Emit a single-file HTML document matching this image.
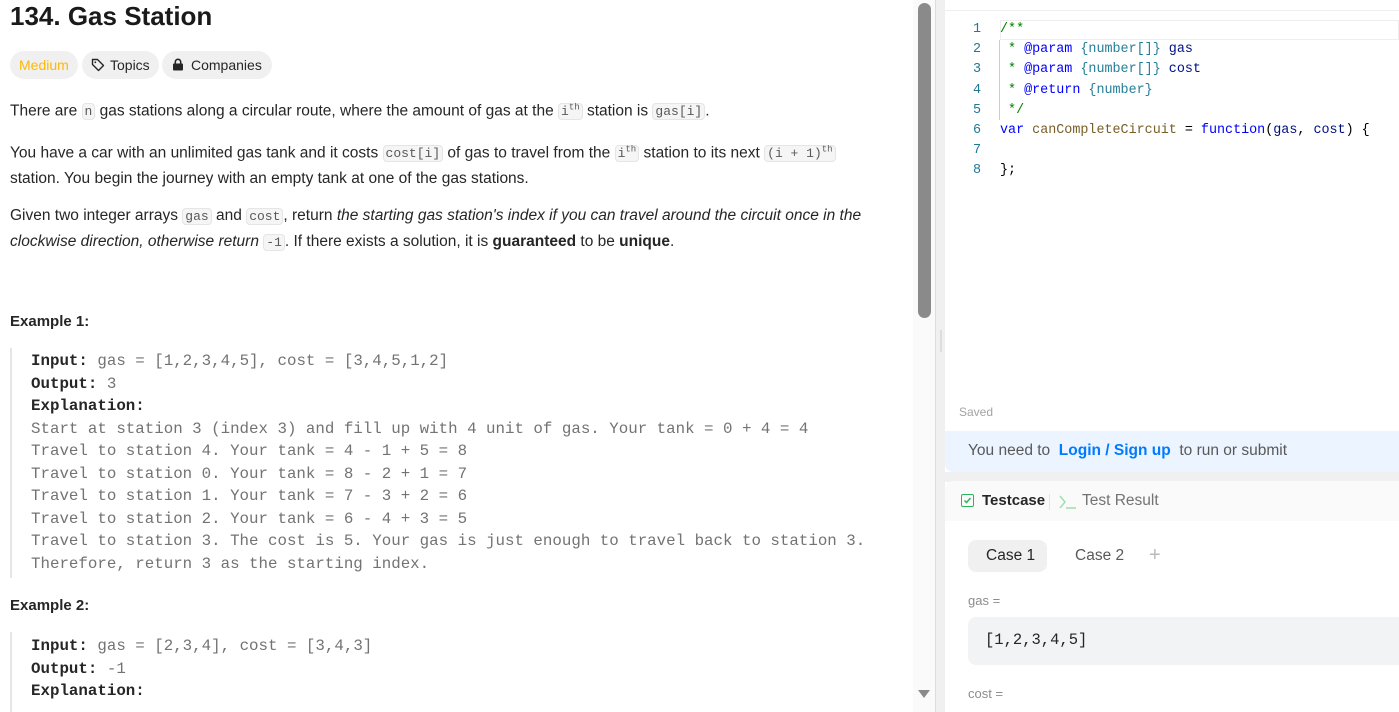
<!DOCTYPE html>
<html><head><meta charset="utf-8"><style>
*{box-sizing:border-box;margin:0;padding:0}
body{width:1399px;height:712px;overflow:hidden;background:#fff;font-family:"Liberation Sans",sans-serif;color:#262626;position:relative}
.abs{position:absolute}
.p{font-size:15.5px;color:#262626;line-height:25px}
code{font-family:"Liberation Mono",monospace;font-size:13px;background:#f5f5f5;border:1px solid #e5e5e5;border-radius:4px;padding:0 2px;color:#595959}
.pre{font-family:"Liberation Mono",monospace;font-size:15.8px;line-height:22.5px;color:#737373;white-space:pre}
.pre b{color:#262626}
.tag{position:absolute;top:51px;height:28px;border-radius:14px;background:#f0f0f0;font-size:14px;line-height:29px;padding:0 9px}
.code{font-family:"Liberation Mono",monospace;font-size:13.4px;line-height:20.2px;white-space:pre}
.ln{color:#237893;text-align:right;width:20px}
</style></head><body>
<div class="abs" style="left:10px;top:1px;font-size:26px;font-weight:bold;color:#1a1a1a">134. Gas Station</div>
<div class="tag" style="left:10px;color:#ffb800">Medium</div>
<div class="tag" style="left:82px"><svg width="14" height="14" viewBox="0 0 14 14" style="vertical-align:-2px;margin-right:5px"><path d="M1.5 1.5h5l6 6-5 5-6-6z" fill="none" stroke="#262626" stroke-width="1.4" stroke-linejoin="round"/><circle cx="4.3" cy="4.3" r="0.9" fill="#262626"/></svg>Topics</div>
<div class="tag" style="left:162px;padding:0 10px"><svg width="12" height="13" viewBox="0 0 12 13" style="vertical-align:-1px;margin-right:7px"><rect x="1" y="5.5" width="10" height="7" rx="1" fill="#262626"/><path d="M3.3 5.5V4a2.7 2.7 0 0 1 5.4 0v1.5" fill="none" stroke="#262626" stroke-width="1.6"/></svg>Companies</div>
<div class="abs p" style="left:10px;top:96px">There are <code>n</code> gas stations along a circular route, where the amount of gas at the <code>i<sup style="font-size:9px">th</sup></code> station is <code>gas[i]</code>.</div>
<div class="abs p" style="left:10px;top:138px;width:890px">You have a car with an unlimited gas tank and it costs <code>cost[i]</code> of gas to travel from the <code>i<sup style="font-size:9px">th</sup></code> station to its next <code>(i + 1)<sup style="font-size:9px">th</sup></code><br>station. You begin the journey with an empty tank at one of the gas stations.</div>
<div class="abs p" style="left:10px;top:203px;width:890px">Given two integer arrays <code>gas</code> and <code>cost</code>, return <i>the starting gas station's index if you can travel around the circuit once in the clockwise direction, otherwise return</i> <code>-1</code>. If there exists a solution, it is <b>guaranteed</b> to be <b>unique</b>.</div>
<div class="abs" style="left:10px;top:313px;font-size:15px;font-weight:bold">Example 1:</div>
<div class="abs" style="left:10px;top:348px;width:2px;height:230px;background:#e5e5e5"></div>
<div class="abs pre" style="left:31px;top:350px"><b>Input:</b> gas = [1,2,3,4,5], cost = [3,4,5,1,2]
<b>Output:</b> 3
<b>Explanation:</b>
Start at station 3 (index 3) and fill up with 4 unit of gas. Your tank = 0 + 4 = 4
Travel to station 4. Your tank = 4 - 1 + 5 = 8
Travel to station 0. Your tank = 8 - 2 + 1 = 7
Travel to station 1. Your tank = 7 - 3 + 2 = 6
Travel to station 2. Your tank = 6 - 4 + 3 = 5
Travel to station 3. The cost is 5. Your gas is just enough to travel back to station 3.
Therefore, return 3 as the starting index.</div>
<div class="abs" style="left:10px;top:597px;font-size:15px;font-weight:bold">Example 2:</div>
<div class="abs" style="left:10px;top:632px;width:2px;height:80px;background:#e5e5e5"></div>
<div class="abs pre" style="left:31px;top:635px"><b>Input:</b> gas = [2,3,4], cost = [3,4,3]
<b>Output:</b> -1
<b>Explanation:</b></div>
<div class="abs" style="left:913px;top:0;width:22px;height:712px;background:#fafafa"></div>
<div class="abs" style="left:918px;top:3px;width:13px;height:315px;background:#8a8a8a;border-radius:7px"></div>
<div class="abs" style="left:918px;top:690px;width:0;height:0;border-left:6px solid transparent;border-right:6px solid transparent;border-top:8px solid #8a8a8a"></div>
<div class="abs" style="left:935px;top:0;width:10px;height:712px;background:#f0f0f0;border-left:1px solid #ddd"></div>
<div class="abs" style="left:940px;top:330px;width:2px;height:22px;background:#ddd"></div>
<div class="abs" style="left:945px;top:10px;width:454px;height:1px;background:#eee"></div>
<div class="abs" style="left:1000px;top:20px;width:399px;height:20px;border:1px solid #eee"></div>
<div class="abs" style="left:999px;top:40px;width:1px;height:80px;background:#ccc"></div>
<div class="abs code ln" style="left:961px;top:20px">1
2
3
4
5
6
7
8</div>
<div class="abs code" style="left:1000px;top:20px;color:#000"><span style="color:#008000">/**</span>
<span style="color:#008000"> * </span><span style="color:#0000ff">@param</span> <span style="color:#267f99">{number[]}</span> <span style="color:#001080">gas</span>
<span style="color:#008000"> * </span><span style="color:#0000ff">@param</span> <span style="color:#267f99">{number[]}</span> <span style="color:#001080">cost</span>
<span style="color:#008000"> * </span><span style="color:#0000ff">@return</span> <span style="color:#267f99">{number}</span>
<span style="color:#008000"> */</span>
<span style="color:#0000ff">var</span> <span style="color:#795e26">canCompleteCircuit</span> = <span style="color:#0000ff">function</span>(<span style="color:#001080">gas</span>, <span style="color:#001080">cost</span>) {

};</div>
<div class="abs" style="left:959px;top:405px;font-size:12px;color:#a3a3a3">Saved</div>
<div class="abs" style="left:945px;top:431px;width:454px;height:41px;background:#ebf4ff;border-radius:0 0 0 8px"></div>
<div class="abs" style="left:968px;top:442px;font-size:15.5px;color:#595959">You need to &nbsp;<span style="color:#007aff;font-weight:bold">Login / Sign up</span>&nbsp; to run or submit</div>
<div class="abs" style="left:945px;top:472px;width:454px;height:10px;background:#f0f0f0"></div>
<div class="abs" style="left:945px;top:481px;width:454px;height:40px;background:#fafafa;border-radius:8px 0 0 0"></div>
<div class="abs" style="left:961px;top:494px;width:13px;height:13px;border:1.5px solid #2db55d;border-radius:2px"></div>
<svg class="abs" style="left:961px;top:494px" width="13" height="13"><path d="M3.5 6.5l2 2 4-4.5" fill="none" stroke="#2db55d" stroke-width="1.5"/></svg>
<div class="abs" style="left:982px;top:492px;font-size:15px;font-weight:bold;color:#262626">Testcase</div>
<div class="abs" style="left:1049px;top:494px;width:1px;height:16px;background:#e5e5e5"></div>
<svg class="abs" style="left:1058px;top:494px" width="20" height="16"><path d="M2 2l5 6-5 6M8 14h10" fill="none" stroke="#9ee0b0" stroke-width="1.5"/></svg>
<div class="abs" style="left:1082px;top:492px;font-size:15.5px;color:#737373">Test Result</div>
<div class="abs" style="left:968px;top:540px;width:79px;height:32px;background:#f0f0f0;border-radius:8px"></div>
<div class="abs" style="left:986px;top:547px;font-size:15.5px;color:#262626">Case 1</div>
<div class="abs" style="left:1075px;top:547px;font-size:15.5px;color:#595959">Case 2</div>
<div class="abs" style="left:1149px;top:544px;font-size:20px;color:#bbb">+</div>
<div class="abs" style="left:968px;top:593px;font-size:13px;color:#8c8c8c">gas =</div>
<div class="abs" style="left:968px;top:617px;width:431px;height:48px;background:#f2f3f5;border-radius:8px 0 0 8px"></div>
<div class="abs" style="left:985px;top:631px;font-family:'Liberation Mono',monospace;font-size:15.5px;color:#262626">[1,2,3,4,5]</div>
<div class="abs" style="left:968px;top:686px;font-size:13px;color:#8c8c8c">cost =</div>
</body></html>
